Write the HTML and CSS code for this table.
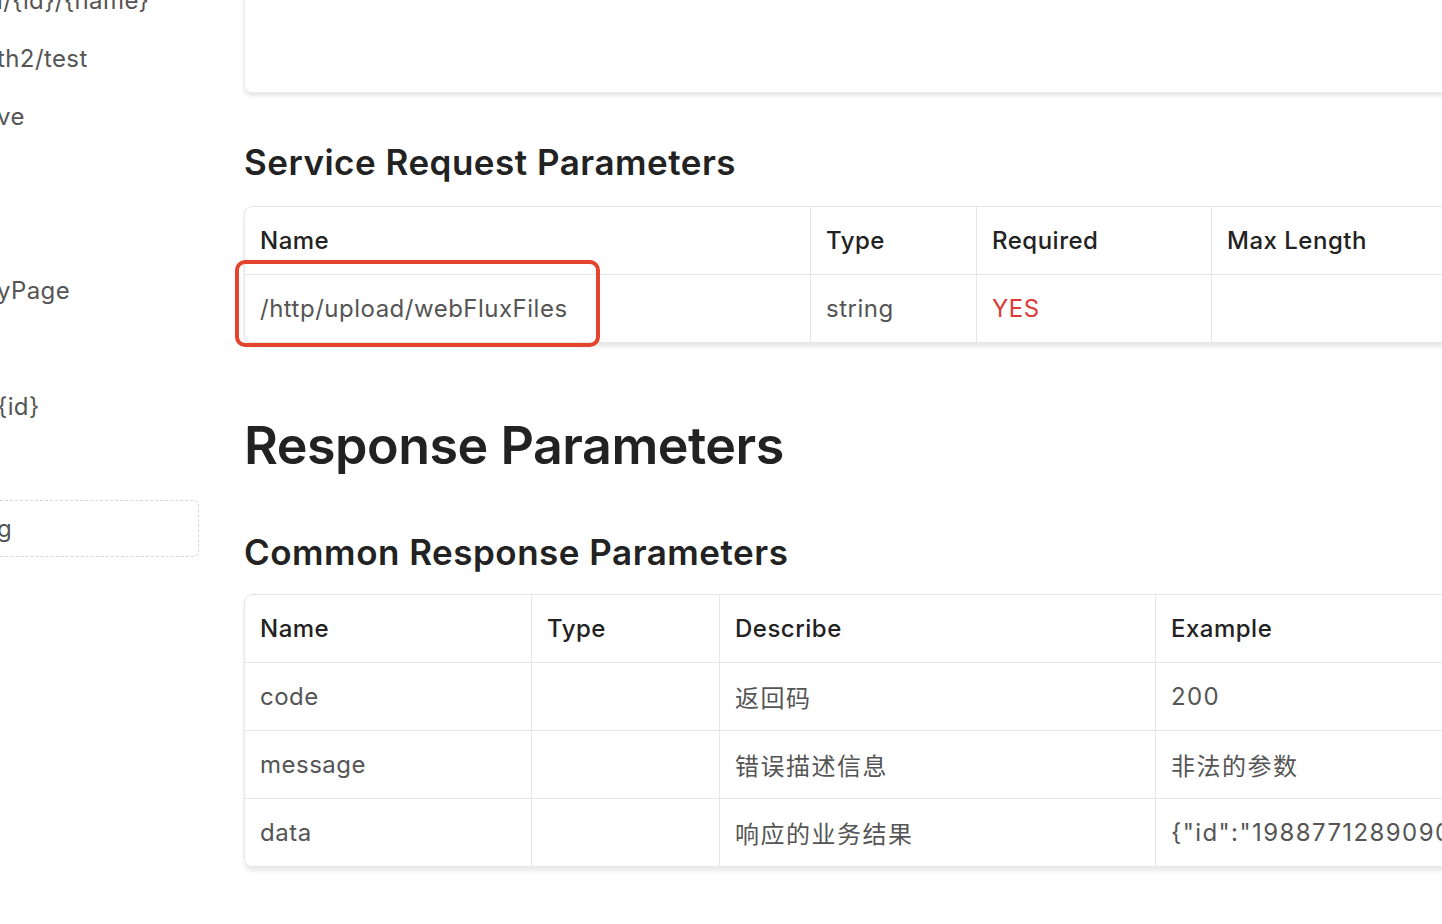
FILE: index.html
```html
<!DOCTYPE html>
<html lang="en">
<head>
<meta charset="utf-8">
<title>API Docs</title>
<link rel="stylesheet" href="styles.css">
</head>
<body>
<div class="page">
  <nav class="sidebar">
    <div class="nav-item">l/{id}/{name}</div>
    <div class="nav-item">th2/test</div>
    <div class="nav-item">ve</div>
    <div class="nav-item"></div>
    <div class="nav-item"></div>
    <div class="nav-item">yPage</div>
    <div class="nav-item"></div>
    <div class="nav-item">{id}</div>
    <div class="nav-item"></div>
    <div class="nav-item active">g</div>
  </nav>
  <main class="main">
    <div class="card"></div>

    <h2 class="sub first">Service Request Parameters</h2>
    <div class="table-wrap">
      <table class="params">
        <colgroup><col style="width:566px"><col style="width:166px"><col style="width:235px"><col></colgroup>
        <thead><tr><th>Name</th><th>Type</th><th>Required</th><th>Max Length</th></tr></thead>
        <tbody><tr><td>/http/upload/webFluxFiles</td><td>string</td><td class="req">YES</td><td></td></tr></tbody>
      </table>
      <div class="highlight"></div>
    </div>

    <h1 class="title">Response Parameters</h1>

    <h2 class="sub second">Common Response Parameters</h2>
    <div class="table-wrap">
      <table class="params">
        <colgroup><col style="width:287px"><col style="width:188px"><col style="width:436px"><col></colgroup>
        <thead><tr><th>Name</th><th>Type</th><th>Describe</th><th>Example</th></tr></thead>
        <tbody>
          <tr><td>code</td><td></td><td class="cjk">返回码</td><td class="num">200</td></tr>
          <tr><td>message</td><td></td><td class="cjk">错误描述信息</td><td class="cjk">非法的参数</td></tr>
          <tr><td>data</td><td></td><td class="cjk">响应的业务结果</td><td class="num">{"id":"1988771289090","name":"test"}</td></tr>
        </tbody>
      </table>
    </div>
  </main>
</div>
</body>
</html>
```

FILE: styles.css
```css
html, body {
  margin: 0;
  padding: 0;
  background: #fff;
}
body {
  width: 1442px;
  height: 924px;
  overflow: hidden;
  font-family: Inter, "Noto Sans CJK SC", sans-serif;
  color: #222;
}
.page {
  display: flex;
  height: 924px;
  overflow: hidden;
}
.sidebar {
  width: 200px;
  flex: none;
  margin-top: -29px;
  display: flex;
  flex-direction: column;
}
.nav-item {
  height: 58px;
  flex: none;
  display: flex;
  align-items: center;
  font-size: 24px;
  letter-spacing: 0.4px;
  color: #555;
  white-space: nowrap;
  overflow: hidden;
  text-indent: -3px;
}
.nav-item.active {
  box-sizing: border-box;
  width: 199px;
  height: 57px;
  margin-top: 7px;
  border: 1px dashed #d6d6d6;
  border-left: none;
  border-radius: 0 6px 6px 0;
}
.main {
  margin-left: 44px;
  width: 1400px;
  flex: none;
  display: flex;
  flex-direction: column;
}
.card {
  height: 180px;
  margin-top: -89px;
  border: 1px solid #ececec;
  border-radius: 8px;
  box-shadow: 0 3px 4px rgba(0, 0, 0, 0.1);
  flex: none;
}
.sub {
  font-size: 35px;
  font-weight: 600;
  letter-spacing: 0.5px;
  line-height: 44px;
  margin: 0;
  color: #222;
}
.sub.first { margin-top: 47px; margin-bottom: 22px; }
.sub.second { margin-top: 53px; margin-bottom: 20px; }
.title {
  font-size: 52px;
  font-weight: 600;
  letter-spacing: -0.5px;
  line-height: 62px;
  margin: 72px 0 0;
  color: #222;
}
.table-wrap {
  position: relative;
}
.params {
  width: 100%;
  table-layout: fixed;
  border-collapse: separate;
  border-spacing: 0;
  border: 1px solid #e6e6e6;
  border-radius: 8px;
  box-shadow: 0 4px 4px rgba(0, 0, 0, 0.09);
}
.params th,
.params td {
  height: 67px;
  padding: 0 15px;
  text-align: left;
  font-size: 24px;
  letter-spacing: 0.5px;
  border-right: 1px solid #e6e6e6;
  border-bottom: 1px solid #e6e6e6;
  white-space: nowrap;
  overflow: hidden;
}
.params th {
  font-weight: 500;
  color: #222;
}
.params td {
  font-weight: 400;
  color: #555;
}
.params td.cjk {
  letter-spacing: 1.5px;
}
.params td.num {
  letter-spacing: 1.4px;
}
.params tbody tr:last-child td {
  border-bottom: none;
}
.params td.req {
  color: #dc3a3a;
}
.highlight {
  position: absolute;
  left: -9px;
  top: 54px;
  width: 365px;
  height: 87px;
  box-sizing: border-box;
  border: 4px solid #e4432d;
  border-radius: 10px;
}
```
